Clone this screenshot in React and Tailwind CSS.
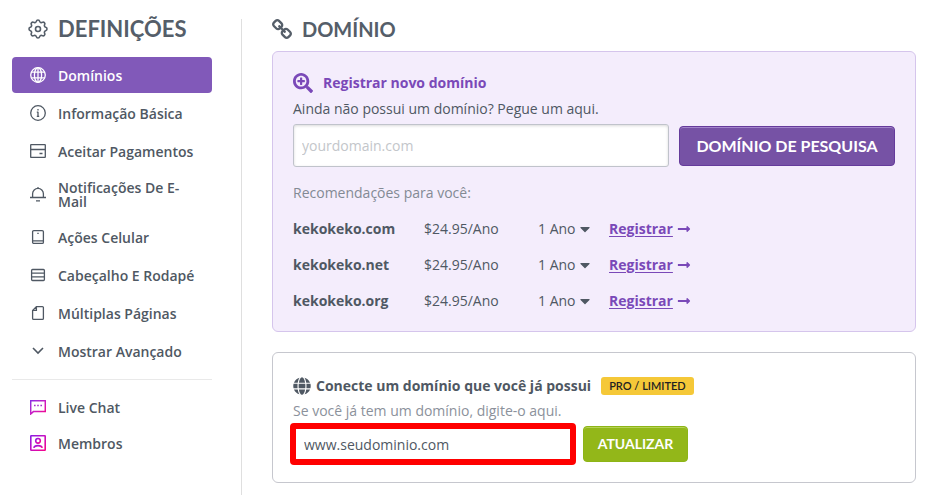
import { useState } from 'react';
import clsx from 'clsx';
import { FaCaretDown, FaGlobe, FaLongArrowAltRight, FaSearchPlus } from 'react-icons/fa';

const HEADING_FONT = "font-['Lato',sans-serif]";

function LineIcon({ children, className = 'size-4' }) {
  return (
    <svg
      viewBox="0 0 16 16"
      fill="none"
      stroke="currentColor"
      strokeWidth="1.3"
      className={clsx('shrink-0', className)}
      aria-hidden="true"
    >
      {children}
    </svg>
  );
}

function GearIcon() {
  return (
    <svg
      viewBox="2 2 20 20"
      fill="none"
      stroke="currentColor"
      strokeWidth="1.6"
      className="size-5 shrink-0"
      aria-hidden="true"
    >
      <path d="M10.325 4.317c.426-1.756 2.924-1.756 3.35 0a1.724 1.724 0 002.573 1.066c1.543-.94 3.31.826 2.37 2.37a1.724 1.724 0 001.065 2.572c1.756.426 1.756 2.924 0 3.35a1.724 1.724 0 00-1.066 2.573c.94 1.543-.826 3.31-2.37 2.37a1.724 1.724 0 00-2.572 1.065c-.426 1.756-2.924 1.756-3.35 0a1.724 1.724 0 00-2.573-1.066c-1.543.94-3.31-.826-2.37-2.37a1.724 1.724 0 00-1.065-2.572c-1.756-.426-1.756-2.924 0-3.35a1.724 1.724 0 001.066-2.573c-.94-1.543.826-3.31 2.37-2.37.996.608 2.296.07 2.572-1.065z" />
      <circle cx="12" cy="12" r="2.5" />
    </svg>
  );
}

function ChainIcon() {
  return (
    <svg viewBox="16 16 1632 1632" fill="currentColor" className="size-5 shrink-0" aria-hidden="true">
      <path d="M1456 1216q0-40-28-68l-208-208q-28-28-68-28-42 0-72 32 3 3 19 18.5t21.5 21.5 15 19 13 25.5 3.5 27.5q0 40-28 68t-68 28q-15 0-27.5-3.5t-25.5-13-19-15-21.5-21.5-18.5-19q-33 31-33 73 0 40 28 68l206 207q27 27 68 27 40 0 68-26l147-146q28-28 28-67zm-703-705q0-40-28-68l-206-207q-28-28-68-28-39 0-68 27l-147 146q-28 28-28 67 0 40 28 68l208 208q27 27 68 27 42 0 72-31-3-3-19-18.5t-21.5-21.5-15-19-13-25.5-3.5-27.5q0-40 28-68t68-28q15 0 27.5 3.5t25.5 13 19 15 21.5 21.5 18.5 19q33-31 33-73zm895 705q0 120-85 203l-147 146q-83 83-203 83-121 0-204-85l-206-207q-83-83-83-203 0-123 88-209l-88-88q-86 88-208 88-120 0-204-84l-208-208q-84-84-84-204t85-203l147-146q83-83 203-83 121 0 204 85l206 207q83 83 83 203 0 123-88 209l88 88q86-88 208-88 120 0 204 84l208 208q84 84 84 204z" />
    </svg>
  );
}

const GlobeIcon = () => (
  <LineIcon>
    <circle cx="8" cy="8" r="7.3" />
    <ellipse cx="8" cy="8" rx="3.6" ry="7.3" />
    <path d="M8 .7v14.6M1.4 5.2h13.2M1.4 10.8h13.2" />
  </LineIcon>
);

const InfoIcon = () => (
  <LineIcon>
    <circle cx="8" cy="8" r="7.3" />
    <path d="M8 6.8v4.4M6.8 7.2H8M6.8 11.4h2.4M8 4v1.4" />
  </LineIcon>
);

const PaymentIcon = () => (
  <LineIcon>
    <rect x=".7" y="1.6" width="14.6" height="12.8" rx=".5" />
    <path d="M.7 6.5h14.6M9.5 10.5h3" />
  </LineIcon>
);

const BellIcon = () => (
  <LineIcon>
    <path d="M0 11.5h16M2.6 11.5V7.8a5.4 5.4 0 0110.8 0v3.7M8 1v1.4M6 14.8h4" />
  </LineIcon>
);

const PhoneIcon = () => (
  <LineIcon>
    <rect x="2.6" y="1.6" width="10.8" height="12.8" rx="1.2" />
    <path d="M2.6 11.9h10.8M7.3 4.4h1.4" />
  </LineIcon>
);

const RowsIcon = () => (
  <LineIcon>
    <rect x="1.6" y="2.5" width="12.8" height="11" rx="1" />
    <path d="M1.6 6.2h12.8M1.6 9.8h12.8" />
  </LineIcon>
);

const PageIcon = () => (
  <LineIcon>
    <path d="M6.4 1.6h6a1 1 0 011 1v10.8a1 1 0 01-1 1H3.6a1 1 0 01-1-1V5.4zM6.4 1.6v3.8H2.6" />
  </LineIcon>
);

const ChevronIcon = () => (
  <LineIcon>
    <path d="M3 5l5 5 5-5" strokeWidth="1.6" />
  </LineIcon>
);

const ChatIcon = () => (
  <LineIcon>
    <defs>
      <linearGradient id="chat-stroke" x1="0" y1="0" x2="1" y2="1">
        <stop offset="0" stopColor="#8b2be2" />
        <stop offset=".5" stopColor="#c81fc4" />
        <stop offset="1" stopColor="#f5058c" />
      </linearGradient>
    </defs>
    <path d="M.7 1.8h14.6v10.8H3.4L.7 15z" stroke="url(#chat-stroke)" strokeWidth="1.5" />
    <path d="M4 6.5h1.6M7.2 6.5h1.6M10.4 6.5H12" stroke="#a734cf" strokeWidth="1.6" />
  </LineIcon>
);

const MemberIcon = () => (
  <LineIcon>
    <defs>
      <linearGradient id="member-stroke" x1="0" y1="0" x2="1" y2="1">
        <stop offset="0" stopColor="#8b1be2" />
        <stop offset=".5" stopColor="#c80fc0" />
        <stop offset="1" stopColor="#f5058c" />
      </linearGradient>
    </defs>
    <g stroke="url(#member-stroke)" strokeWidth="1.6">
      <rect x=".8" y=".8" width="14.4" height="14.4" rx=".4" />
      <circle cx="8" cy="5.8" r="2.3" />
      <path d="M3.8 12.9c.3-1.7 1.7-2.3 4.2-2.3s3.9.6 4.2 2.3" />
    </g>
  </LineIcon>
);

const SETTINGS = [
  { label: 'Domínios', icon: GlobeIcon, active: true },
  { label: 'Informação Básica', icon: InfoIcon },
  { label: 'Aceitar Pagamentos', icon: PaymentIcon },
  { label: 'Notificações De E-Mail', icon: BellIcon },
  { label: 'Ações Celular', icon: PhoneIcon },
  { label: 'Cabeçalho E Rodapé', icon: RowsIcon },
  { label: 'Múltiplas Páginas', icon: PageIcon },
  { label: 'Mostrar Avançado', icon: ChevronIcon },
];

const EXTRAS = [
  { label: 'Live Chat', icon: ChatIcon },
  { label: 'Membros', icon: MemberIcon },
];

const DOMAINS = ['kekokeko.com', 'kekokeko.net', 'kekokeko.org'];

function NavItem({ label, icon: Icon, active }) {
  return (
    <a
      href="#"
      aria-current={active ? 'page' : undefined}
      className={clsx(
        'flex min-h-9 items-center gap-3 rounded py-2 pr-4 pl-[18px] leading-[14px] font-semibold',
        active ? 'bg-[#8159b9] text-white' : 'text-[#4f5863]'
      )}
    >
      <Icon />
      <span className="pt-0.5">{label}</span>
    </a>
  );
}

function Sidebar() {
  return (
    <aside className="w-[242px] shrink-0 border-r border-[#dfdfdf] pr-[29px] pl-3">
      <h2
        className={clsx(
          HEADING_FONT,
          'mb-[18px] flex items-center gap-2.5 pl-4 text-[22px] leading-5 font-bold text-[#555e69]'
        )}
      >
        <GearIcon />
        DEFINIÇÕES
      </h2>
      <nav className="flex flex-col gap-0.5">
        {SETTINGS.map((item) => (
          <NavItem key={item.label} {...item} />
        ))}
      </nav>
      <nav className="mt-[10px] border-t border-[#e9e9e9] pt-[9px]">
        {EXTRAS.map((item) => (
          <NavItem key={item.label} {...item} />
        ))}
      </nav>
    </aside>
  );
}

function RegisterCard() {
  const [query, setQuery] = useState('');

  return (
    <section className="rounded-md border border-[#d5c5ec] bg-[#f4edfc] px-5 pt-[21px] pb-3">
      <h3 className="flex items-center gap-2.5 leading-5 font-bold text-[#7a49b8]">
        <FaSearchPlus className="size-5" />
        Registrar novo domínio
      </h3>
      <label htmlFor="new-domain" className="mt-1.5 block leading-5">
        Ainda não possui um domínio? Pegue um aqui.
      </label>
      <form className="mt-[5px] flex items-center gap-2.5" onSubmit={(e) => e.preventDefault()}>
        <input
          id="new-domain"
          type="text"
          placeholder="yourdomain.com"
          value={query}
          onChange={(e) => setQuery(e.target.value)}
          className="h-[43px] min-w-0 flex-1 rounded-[3px] border border-[#c0c3cb] bg-white px-2 shadow-[inset_0_1px_3px_rgba(0,0,0,0.15)] placeholder:text-[#c3c6ca]"
        />
        <button
          type="submit"
          className={clsx(
            HEADING_FONT,
            'h-10 w-[216px] rounded border border-[#653b9b] bg-[#7652a5] text-base font-bold text-white shadow-[inset_0_1px_0_#a283cb]'
          )}
        >
          DOMÍNIO DE PESQUISA
        </button>
      </form>
      <p className="mt-4 leading-5 text-[#838a94]">Recomendações para você:</p>
      <table className="mt-2">
        <tbody>
          {DOMAINS.map((domain) => (
            <tr key={domain} className="h-9">
              <th scope="row" className="w-[131px] p-0 text-left font-bold">
                {domain}
              </th>
              <td className="w-[114px] p-0">$24.95/Ano</td>
              <td className="w-[71px] p-0">
                <div className="relative w-[55px]">
                  <select aria-label={`Período de ${domain}`} className="block w-full appearance-none bg-transparent">
                    <option>1 Ano</option>
                  </select>
                  <FaCaretDown className="pointer-events-none absolute top-0.5 right-0 size-4" />
                </div>
              </td>
              <td className="p-0">
                <a href="#" className="flex items-center gap-1 font-bold text-[#7a49b8]">
                  <span className="underline underline-offset-2">Registrar</span>
                  <FaLongArrowAltRight className="size-3.5" />
                </a>
              </td>
            </tr>
          ))}
        </tbody>
      </table>
    </section>
  );
}

function ConnectCard() {
  const [domain, setDomain] = useState('www.seudominio.com');

  return (
    <section className="mt-5 rounded-md border border-[#c6c7ce] bg-white px-5 pt-[23px] pb-5">
      <div className="flex h-5 items-center">
        <FaGlobe className="mr-[5px] size-[18px]" />
        <h3 className="font-bold">Conecte um domínio que você já possui</h3>
        <span
          className={clsx(
            HEADING_FONT,
            'ml-2.5 rounded-[3px] bg-[#f5c838] px-2 text-[11px] leading-[18px] font-semibold text-[#222]'
          )}
        >
          PRO / LIMITED
        </span>
      </div>
      <label htmlFor="own-domain" className="mt-[5px] block leading-5 text-[#8b919b]">
        Se você já tem um domínio, digite-o aqui.
      </label>
      <form className="mt-[5px] flex gap-2.5" onSubmit={(e) => e.preventDefault()}>
        <input
          id="own-domain"
          type="text"
          value={domain}
          onChange={(e) => setDomain(e.target.value)}
          className="h-9 w-[280px] rounded-[1px] bg-white px-[11px] outline-6 -outline-offset-3 outline-[#ff0000]"
        />
        <button
          type="submit"
          className={clsx(
            HEADING_FONT,
            'h-9 w-[105px] rounded border border-[#8db517] bg-[#93b719] font-bold text-white shadow-[inset_0_1px_0_#b5d256]'
          )}
        >
          ATUALIZAR
        </button>
      </form>
    </section>
  );
}

export default function App() {
  return (
    <div className="flex min-h-screen flex-col bg-white pt-[19px] font-['Open_Sans',sans-serif] text-sm text-[#4f5863]">
      <div className="flex flex-1">
        <Sidebar />
        <main className="min-w-0 flex-1 pr-[21px] pl-[30px]">
          <h1
            className={clsx(
              HEADING_FONT,
              'mb-3 flex items-center gap-2.5 text-xl leading-5 font-bold text-[#555e69]'
            )}
          >
            <ChainIcon />
            DOMÍNIO
          </h1>
          <RegisterCard />
          <ConnectCard />
        </main>
      </div>
    </div>
  );
}
